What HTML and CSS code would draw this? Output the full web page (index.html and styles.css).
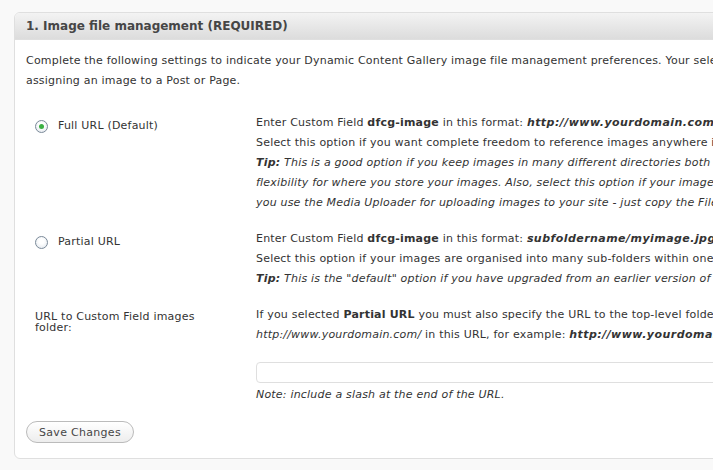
FILE: index.html
```html
<!DOCTYPE html>
<html>
<head>
<meta charset="utf-8">
<link rel="stylesheet" href="styles.css">
</head>
<body>
<div class="panel">
  <h3 class="panel-head">1. Image file management (REQUIRED)</h3>
  <div class="panel-body">
    <p class="intro">Complete the following settings to indicate your Dynamic Content Gallery image file management preferences. Your selection determines how you reference images in the dfcg-image Custom Field when<br>assigning an image to a Post or Page.</p>
    <div class="form-table">
      <div class="th"><label class="radio-label"><span class="radio checked"></span>Full URL (Default)</label></div>
      <div class="td">
        Enter Custom Field <b>dfcg-image</b> in this format: <b class="code">http://www.yourdomain.com/folder/anotherfolder/myimage.jpg</b><br>
        Select this option if you want complete freedom to reference images anywhere in your site and in multiple locations.<br>
        <i><b>Tip:</b> This is a good option if you keep images in many different directories both within and outside of the /wp-content/ folder. It gives maximum<br>
        flexibility for where you store your images. Also, select this option if your images are stored off-site eg Flickr, Picasa etc. This is also the best option if<br>
        you use the Media Uploader for uploading images to your site - just copy the File URL from the Uploader and paste it into the Custom Field.</i>
      </div>
      <div class="th"><label class="radio-label"><span class="radio"></span>Partial URL</label></div>
      <div class="td">
        Enter Custom Field <b>dfcg-image</b> in this format: <b class="code">subfoldername/myimage.jpg</b><br>
        Select this option if your images are organised into many sub-folders within one main folder.<br>
        <i><b>Tip:</b> This is the "default" option if you have upgraded from an earlier version of the plugin.</i>
      </div>
      <div class="th"><span class="field-label">URL to Custom Field images folder:</span></div>
      <div class="td">
        If you selected <b>Partial URL</b> you must also specify the URL to the top-level folder which contains the sub-folders. You may omit your domain name<br>
        <i>http://www.yourdomain.com/</i> in this URL, for example: <b class="code">http://www.yourdomain.com/wp-content/uploads/</b>
        <div class="input"></div>
        <i class="note">Note: include a slash at the end of the URL.</i>
      </div>
    </div>
    <button class="button">Save Changes</button>
  </div>
</div>
</body>
</html>
```
FILE: styles.css
```css
html, body {
  margin: 0;
  padding: 0;
  background: #f9f9f9;
  overflow: hidden;
}
body {
  padding: 12px 0 0 14px;
  font-family: "DejaVu Sans", Verdana, sans-serif;
  font-size: 11px;
  letter-spacing: 0.2px;
  color: #333;
  width: 1200px;
}
.panel {
  width: 1100px;
  border: 1px solid #dfdfdf;
  border-radius: 6px;
  background: #fff;
  overflow: hidden;
}
.panel-head {
  margin: 0;
  height: 26px;
  line-height: 26px;
  padding: 0 11px;
  font-size: 12px;
  font-weight: bold;
  letter-spacing: 0;
  color: #464646;
  background: linear-gradient(#f3f3f3, #dcdcdc);
  border-bottom: 1px solid #dfdfdf;
}
.panel-body {
  padding: 11px 11px 15px;
}
.intro {
  margin: 0;
  line-height: 20px;
  white-space: nowrap;
}
.form-table {
  display: grid;
  grid-template-columns: 230px 1fr;
  row-gap: 16px;
  margin-top: 22px;
}
.th {
  padding-left: 9px;
}
.td {
  line-height: 20px;
  white-space: nowrap;
}
.code {
  font-style: italic;
  letter-spacing: 0.45px;
}
.radio-label {
  display: flex;
  align-items: center;
  gap: 10px;
  margin-top: 3px;
  line-height: 20px;
}
.radio {
  width: 11px;
  height: 11px;
  border-radius: 50%;
  border: 1px solid #7b8a99;
  background: radial-gradient(circle at 50% 40%, #fff 30%, #dde3ea 100%);
  position: relative;
  flex: none;
}
.radio.checked::after {
  content: "";
  position: absolute;
  left: 3px;
  top: 3px;
  width: 5px;
  height: 5px;
  border-radius: 50%;
  background: #3cb043;
}
.field-label {
  display: block;
  width: 180px;
  line-height: 11px;
  margin-top: 6px;
  white-space: normal;
}
.input {
  margin-top: 17px;
  height: 19px;
  width: 600px;
  border: 1px solid #dfdfdf;
  border-radius: 4px;
  background: #fff;
}
.note {
  display: block;
  margin-top: 2px;
}
.button {
  display: block;
  margin-top: 16px;
  height: 22px;
  padding: 0 12px;
  font-family: "DejaVu Sans", Verdana, sans-serif;
  font-size: 11px;
  letter-spacing: 0.3px;
  color: #464646;
  border: 1px solid #bbb;
  border-radius: 11px;
  background: linear-gradient(#fff, #ededed);
}
```
